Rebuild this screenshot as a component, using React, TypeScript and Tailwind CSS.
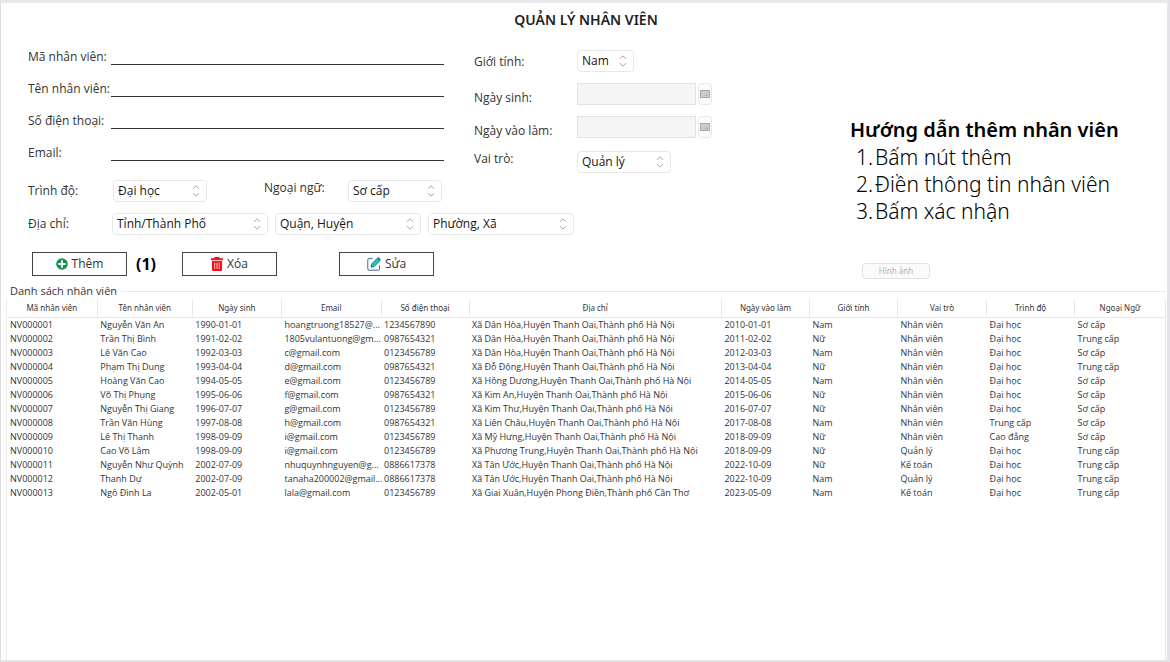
import React, { useId } from "react";

const columns = [
  { name: "Mã nhân viên", width: "w-[7.8%]" },
  { name: "Tên nhân viên", width: "w-[8.2%]" },
  { name: "Ngày sinh", width: "w-[7.7%]" },
  { name: "Email", width: "w-[8.6%]" },
  { name: "Số điện thoại", width: "w-[7.6%]" },
  { name: "Địa chỉ", width: "w-[21.8%]" },
  { name: "Ngày vào làm", width: "w-[7.6%]" },
  { name: "Giới tính", width: "w-[7.6%]" },
  { name: "Vai trò", width: "w-[7.7%]" },
  { name: "Trình độ", width: "w-[7.6%]" },
  { name: "Ngoại Ngữ", width: "w-[7.8%]" },
];

const rows = [
  ["NV000001", "Nguyễn Văn An", "1990-01-01", "hoangtruong18527@...", "1234567890", "Xã Dân Hòa,Huyện Thanh Oai,Thành phố Hà Nội", "2010-01-01", "Nam", "Nhân viên", "Đại học", "Sơ cấp"],
  ["NV000002", "Trần Thị Bình", "1991-02-02", "1805vulantuong@gm...", "0987654321", "Xã Dân Hòa,Huyện Thanh Oai,Thành phố Hà Nội", "2011-02-02", "Nữ", "Nhân viên", "Đại học", "Trung cấp"],
  ["NV000003", "Lê Văn Cao", "1992-03-03", "c@gmail.com", "0123456789", "Xã Dân Hòa,Huyện Thanh Oai,Thành phố Hà Nội", "2012-03-03", "Nam", "Nhân viên", "Đại học", "Sơ cấp"],
  ["NV000004", "Phạm Thị Dung", "1993-04-04", "d@gmail.com", "0987654321", "Xã Đỗ Động,Huyện Thanh Oai,Thành phố Hà Nội", "2013-04-04", "Nữ", "Nhân viên", "Đại học", "Trung cấp"],
  ["NV000005", "Hoàng Văn Cao", "1994-05-05", "e@gmail.com", "0123456789", "Xã Hồng Dương,Huyện Thanh Oai,Thành phố Hà Nội", "2014-05-05", "Nam", "Nhân viên", "Đại học", "Sơ cấp"],
  ["NV000006", "Võ Thị Phụng", "1995-06-06", "f@gmail.com", "0987654321", "Xã Kim An,Huyện Thanh Oai,Thành phố Hà Nội", "2015-06-06", "Nữ", "Nhân viên", "Đại học", "Sơ cấp"],
  ["NV000007", "Nguyễn Thị Giang", "1996-07-07", "g@gmail.com", "0123456789", "Xã Kim Thư,Huyện Thanh Oai,Thành phố Hà Nội", "2016-07-07", "Nữ", "Nhân viên", "Đại học", "Sơ cấp"],
  ["NV000008", "Trần Văn Hùng", "1997-08-08", "h@gmail.com", "0987654321", "Xã Liên Châu,Huyện Thanh Oai,Thành phố Hà Nội", "2017-08-08", "Nam", "Nhân viên", "Trung cấp", "Sơ cấp"],
  ["NV000009", "Lê Thị Thanh", "1998-09-09", "i@gmail.com", "0123456789", "Xã Mỹ Hưng,Huyện Thanh Oai,Thành phố Hà Nội", "2018-09-09", "Nữ", "Nhân viên", "Cao đẳng", "Sơ cấp"],
  ["NV000010", "Cao Võ Lâm", "1998-09-09", "i@gmail.com", "0123456789", "Xã Phương Trung,Huyện Thanh Oai,Thành phố Hà Nội", "2018-09-09", "Nữ", "Quản lý", "Đại học", "Trung cấp"],
  ["NV000011", "Nguyễn Như Quỳnh", "2002-07-09", "nhuquynhnguyen@g...", "0886617378", "Xã Tân Ước,Huyện Thanh Oai,Thành phố Hà Nội", "2022-10-09", "Nữ", "Kế toán", "Đại học", "Trung cấp"],
  ["NV000012", "Thanh Dự", "2002-07-09", "tanaha200002@gmail...", "0886617378", "Xã Tân Ước,Huyện Thanh Oai,Thành phố Hà Nội", "2022-10-09", "Nam", "Quản lý", "Đại học", "Trung cấp"],
  ["NV000013", "Ngô Đình La", "2002-05-01", "lala@gmail.com", "0123456789", "Xã Giai Xuân,Huyện Phong Điền,Thành phố Cần Thơ", "2023-05-09", "Nam", "Kế toán", "Đại học", "Trung cấp"],
];

function LineField({ label, type = "text" }: { label: string; type?: string }) {
  const id = useId();
  return (
    <div className="flex h-8 items-end">
      <label htmlFor={id} className="w-[83px] shrink-0 whitespace-nowrap leading-4">
        {label}
      </label>
      <input id={id} type={type} className="h-6 min-w-0 flex-1 border-b border-[#333] bg-transparent outline-none" />
    </div>
  );
}

function Combo({ id, label, value, width }: { id?: string; label?: string; value: string; width: string }) {
  return (
    <div className={`relative h-[22px] shrink-0 ${width}`}>
      <select
        id={id}
        aria-label={label}
        className="h-full w-full appearance-none rounded-[4px] border border-[#e8e8e8] bg-white pl-1 pr-5 text-[#151515] outline-none"
      >
        <option>{value}</option>
      </select>
      <svg
        viewBox="0 0 8 12"
        className="pointer-events-none absolute right-[7px] top-[5px] h-3 w-2"
        fill="none"
        stroke="#a3a3a3"
        strokeWidth="1"
      >
        <path d="M1 3.800 4 .8l3 3M1 8.200l3 3 3-3" />
      </svg>
    </div>
  );
}

function DateField({ label }: { label: string }) {
  const id = useId();
  return (
    <div className="flex h-[22px] items-end">
      <label htmlFor={id} className="w-[103px] shrink-0 leading-[14px]">
        {label}
      </label>
      <input id={id} disabled className="h-full w-[119px] border border-[#e2e2e2] bg-[#f5f5f5]" />
      <button
        type="button"
        aria-label={`Chọn ${label}`}
        className="ml-[2px] flex h-full w-[14px] items-center justify-center rounded-[4px] border border-[#e6e6e6] bg-[#fcfcfc]"
      >
        <svg viewBox="0 0 10 8" className="h-2 w-[10px] shrink-0">
          <rect x="0.500" y="0.500" width="9" height="7" fill="#cbcbcb" stroke="#a9a9a9" />
          <path d="M5 5.500h3M6.500 4v2" stroke="#b5b5b5" />
        </svg>
      </button>
    </div>
  );
}

function ActionButton({ children }: { children: React.ReactNode }) {
  return (
    <button
      type="button"
      className="flex h-6 w-[95px] items-center justify-center gap-1 border border-[#444] bg-white text-[#333]"
    >
      {children}
    </button>
  );
}

export default function App() {
  return (
    <div className="flex min-h-screen flex-col border-b-2 border-l border-r-[3px] border-t-[3px] border-b-[#e3e3e4] border-l-[#dedede] border-r-[#e3e3e8] border-t-[#e7e8ec] bg-white font-['Open_Sans','Noto_Sans',sans-serif] text-[12px] text-[#333]">
      <h1 className="pl-1 pt-[5px] text-center font-['Noto_Sans',sans-serif] text-[14px] font-semibold leading-6 text-[#222]">
        QUẢN LÝ NHÂN VIÊN
      </h1>

      <div className="grid grid-cols-[822fr_317fr] pl-[27px] pt-px">
        <form>
          <div className="grid grid-cols-[416fr_376fr] gap-x-[30px]">
            <div>
              <LineField label="Mã nhân viên:" />
              <LineField label="Tên nhân viên:" />
              <LineField label="Số điện thoại:" type="tel" />
              <LineField label="Email:" type="email" />
            </div>
            <div className="flex flex-col gap-[11px] pt-[17px]">
              <div className="flex items-center">
                <label htmlFor="gender" className="w-[103px] pt-px">Giới tính:</label>
                <Combo id="gender" value="Nam" width="w-[57px]" />
              </div>
              <DateField label="Ngày sinh:" />
              <DateField label="Ngày vào làm:" />
              <div className="flex items-start pt-[2px]">
                <label htmlFor="role" className="w-[103px] leading-4">Vai trò:</label>
                <Combo id="role" value="Quản lý" width="w-[94px]" />
              </div>
            </div>
          </div>

          <div className="flex items-center pt-[7px]">
            <label htmlFor="level" className="w-[85px]">Trình độ:</label>
            <Combo id="level" value="Đại học" width="w-[94px]" />
            <label htmlFor="language" className="ml-[57px] w-[84px] self-start leading-4">Ngoại ngữ:</label>
            <Combo id="language" value="Sơ cấp" width="w-[94px]" />
          </div>

          <div className="flex items-center pt-[11px]">
            <label htmlFor="province" className="w-[84px]">Địa chỉ:</label>
            <div className="flex gap-[7px]">
              <Combo id="province" value="Tỉnh/Thành Phố" width="w-[156px]" />
              <Combo label="Quận, Huyện" value="Quận, Huyện" width="w-[146px]" />
              <Combo label="Phường, Xã" value="Phường, Xã" width="w-[146px]" />
            </div>
          </div>

          <div className="flex items-center pl-1 pt-[17px]">
            <ActionButton>
              <svg viewBox="0 0 12 12" className="h-3 w-3">
                <circle cx="6" cy="6" r="5.800" fill="#15934b" />
                <path d="M6 3v6M3 6h6" stroke="#fff" strokeWidth="1.800" strokeLinecap="round" />
              </svg>
              Thêm
            </ActionButton>
            <span className="w-[55px] pl-[9px] text-[16px] font-bold leading-6 text-black">(1)</span>
            <ActionButton>
              <svg viewBox="0 0 12 14" className="h-[14px] w-3" fill="#f90d12">
                <path d="M3.500 0h5v1.300H12v2H0v-2h3.500zM1 4h10v8.800a1.200 1.200 0 0 1-1.200 1.200H2.200A1.200 1.200 0 0 1 1 12.800z" />
                <path d="M3.700 5.500v6.500M6 5.500v6.500M8.300 5.500v6.500" stroke="#fff" strokeWidth="0.800" />
              </svg>
              Xóa
            </ActionButton>
            <span className="w-[62px]" />
            <ActionButton>
              <svg viewBox="0 0 14 14" className="h-[14px] w-[14px]">
                <path d="M5.500 1.500H2A1.200 1.200 0 0 0 .8 2.700V12A1.200 1.200 0 0 0 2 13.200h9.300a1.200 1.200 0 0 0 1.200-1.200V8.500" fill="none" stroke="#3f6c96" strokeWidth="1" />
                <path d="M4 10.200l.9-3.400L10.600 1l2.600 2.500-5.900 5.800z" fill="#14cdbd" stroke="#1c4f7a" strokeWidth="0.800" strokeLinejoin="round" />
                <path d="M10.600 1 11.600.3l2.100 2.100-.5 1.100zM4 10.200l.5-1.700 1.200 1.200z" fill="#1d5288" />
              </svg>
              Sửa
            </ActionButton>
          </div>
        </form>

        <aside className="flex flex-col items-start pt-[83px] font-['Noto_Sans',sans-serif] text-black">
          <h2 className="text-[20px] font-semibold leading-7">Hướng dẫn thêm nhân viên</h2>
          <ol className="pl-[6px] text-[21px] font-light leading-[27px]">
            {["Bấm nút thêm", "Điền thông tin nhân viên", "Bấm xác nhận"].map((step, i) => (
              <li key={step} className="flex">
                <span className="w-[19px]">{i + 1}.</span>
                {step}
              </li>
            ))}
          </ol>
          <button
            type="button"
            disabled
            className="ml-3 mt-[38px] h-4 w-[68px] rounded-[4px] border border-[#e3e3e3] bg-[#fafafa] text-[8px] leading-3 text-[#b4b4b4]"
          >
            Hình ảnh
          </button>
        </aside>
      </div>

      <section className="mr-px mt-1 flex flex-1 flex-col pl-[5px]" aria-labelledby="list-title">
        <div className="flex h-4 items-center gap-1 pl-1">
          <h2 id="list-title" className="text-[11px] leading-4">Danh sách nhân viên</h2>
          <span className="h-px flex-1 bg-[#e8e8e8]" />
        </div>
        <div className="flex-1 border-x border-[#ebebeb]">
          <table className="w-full table-fixed border-collapse text-[9px] leading-[14px] text-[#333]">
            <thead>
              <tr className="h-[18px] border-b border-[#e8e8e8]">
                {columns.map((c) => (
                  <th key={c.name} className={`border-r border-[#e8e8e8] p-0 font-['Noto_Sans',sans-serif] text-[8px] font-normal last:border-r-0 ${c.width}`}>
                    {c.name}
                  </th>
                ))}
              </tr>
            </thead>
            <tbody>
              {rows.map((r) => (
                <tr key={r[0]} className="h-[14px]">
                  {r.map((cell, i) => (
                    <td key={i} className="whitespace-nowrap py-0 pl-[3px] pr-0">
                      {cell}
                    </td>
                  ))}
                </tr>
              ))}
            </tbody>
          </table>
        </div>
      </section>
    </div>
  );
}
